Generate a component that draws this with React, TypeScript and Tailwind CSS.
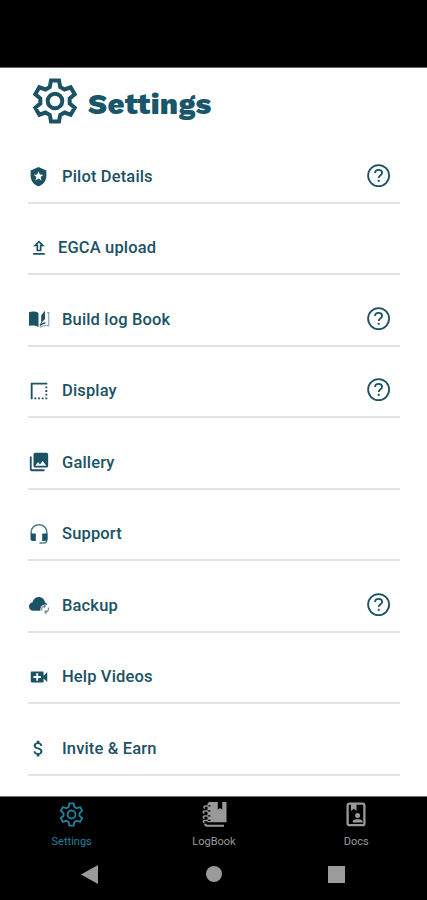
import type { ReactNode } from 'react';
import {
  MdAttachMoney,
  MdBorderStyle,
  MdCollections,
  MdLocalPolice,
  MdOutlineUpload,
  MdVideoCall,
} from 'react-icons/md';

const GEAR =
  'M-4 -20.5H4L5.2 -14L9.5 -11.5L15.7 -13.7L19.7 -6.8L14.7 -2.5V2.5L19.7 6.8L15.7 13.7L9.5 11.5L5.2 14L4 20.5H-4L-5.2 14L-9.5 11.5L-15.7 13.7L-19.7 6.8L-14.7 2.5V-2.5L-19.7 -6.8L-15.7 -13.7L-9.5 -11.5L-5.2 -14Z';

function Gear({ size, stroke }: { size: number; stroke: number }) {
  return (
    <svg width={size} height={size} viewBox="-23 -23 46 46" fill="none" stroke="currentColor" strokeWidth={stroke}>
      <path d={GEAR} />
      <circle r="7.3" />
    </svg>
  );
}

function BookPen() {
  return (
    <svg width="22" height="18" viewBox="0 0 22 18" fill="currentColor">
      <path d="M1 2.2C4 1.2 7.5 1.2 10.5 3V17C7.5 15.6 4 15.2 1 16Z" />
      <path d="M13.2 5.5L17 .8V9L13.2 13.2Z" />
      <path d="M11.8 13.8L17.5 12V13.4C15 13.8 13.2 15 11.8 16.6Z" />
      <path d="M19.2 2.6H20.8V15.6C17 15.2 14.5 15.6 12 17.3" fill="none" stroke="currentColor" strokeWidth="1.1" opacity=".55" />
    </svg>
  );
}

function Headset() {
  return (
    <svg width="20" height="22" viewBox="0 0 20 22" fill="none" stroke="currentColor">
      <path d="M2.2 11V9.3C2.2 4.8 5.5 1.8 10 1.8S17.8 4.8 17.8 9.3V17C17.8 19 16.5 20 14.8 20H10.5" strokeWidth="1.5" opacity=".75" />
      <path d="M1.5 10.5H6.8V18H4C2.3 18 1.5 16.9 1.5 15.5ZM13.2 10.5H18.5V15.5C18.5 16.9 17.7 18 16 18H13.2Z" fill="currentColor" stroke="none" />
    </svg>
  );
}

function CloudSync() {
  return (
    <svg width="22" height="18" viewBox="0 0 22 18">
      <path
        d="M5.3 14.8C2.7 14.8 1 13 1 10.5C1 8.2 2.5 6.5 4.6 6.2C5.4 3 7.6 1 10.8 1C14.1 1 16.5 3.2 17 6.4C18.4 6.8 19.2 7.6 19.4 8.8L16.4 8.4C13.4 8.8 12 11.2 12.4 14.8Z"
        fill="currentColor"
      />
      <path
        d="M14 14.4C13 12 14.4 9.8 17 10M15.6 8.5L17.3 10L15.8 11.8M20.2 11.4C21.2 13.8 19.6 16.2 17.2 16M18.6 17.6L16.8 16L18.4 14.3"
        fill="none"
        stroke="currentColor"
        strokeWidth="1.2"
        opacity=".65"
      />
    </svg>
  );
}

function HelpIcon() {
  return (
    <svg width="24" height="24" viewBox="0 0 24 24" fill="none" stroke="currentColor" strokeWidth="1.8">
      <circle cx="11.6" cy="11.6" r="10.5" />
      <path d="M8.1 9C8.1 7 9.6 5.8 11.6 5.8S15.1 7 15.1 8.9C15.1 11.2 11.7 11.4 11.7 14.1" />
      <path d="M11.7 15.8V17.8" strokeWidth="2" />
    </svg>
  );
}

function LogBookIcon() {
  return (
    <svg width="28" height="27" viewBox="0 0 28 27" fill="currentColor">
      <path d="M9 1H17.8V8.8L20 7L22.2 8.8V1H26.5V21.3H7.5V2.5Z" />
      <path d="M7 4.9H10.5M7 9.9H10.5M7 14.9H10.5M7 19.4H10.5" stroke="#000" strokeWidth="1.4" />
      <path
        d="M8.5 4.9H5.2C3.6 4.9 3.6 7.2 5.2 7.2M8 9.9H4.5C2.8 9.9 2.8 12.2 4.5 12.2M8 14.9H4.5C2.8 14.9 2.8 17.2 4.5 17.2M8 19.4H4.5C2.8 19.4 2.8 21.5 4.5 21.5"
        fill="none"
        stroke="currentColor"
        strokeWidth="1.5"
      />
      <path d="M5 22.7C5.2 24.2 5.8 24.7 7 24.7H24" fill="none" stroke="currentColor" strokeWidth="2" />
    </svg>
  );
}

function DocsIcon() {
  return (
    <svg width="20" height="25" viewBox="0 0 20 25" fill="currentColor">
      <rect x="1.6" y="1.6" width="16.8" height="21.6" rx="1.8" fill="none" stroke="currentColor" strokeWidth="2.3" />
      <path d="M5 2H10.5V9L7.8 6.8L5 9Z" />
      <circle cx="11.6" cy="13.4" r="2.5" />
      <path d="M6.8 20.6V19.2C6.8 17.7 9 17.2 11.6 17.2S16.4 17.7 16.4 19.2V20.6Z" />
    </svg>
  );
}

type Item = { label: string; icon: ReactNode; help?: boolean; tight?: boolean };

const items: Item[] = [
  { label: 'Pilot Details', icon: <MdLocalPolice size={21} />, help: true },
  { label: 'EGCA upload', icon: <MdOutlineUpload size={20} />, tight: true },
  { label: 'Build log Book', icon: <BookPen />, help: true },
  { label: 'Display', icon: <MdBorderStyle size={22} />, help: true },
  { label: 'Gallery', icon: <MdCollections size={22} /> },
  { label: 'Support', icon: <Headset /> },
  { label: 'Backup', icon: <CloudSync />, help: true },
  { label: 'Help Videos', icon: <MdVideoCall size={22} /> },
  { label: 'Invite & Earn', icon: <MdAttachMoney size={21} /> },
];

const tabs = [
  { label: 'Settings', icon: <Gear size={25} stroke={3.4} />, active: true },
  { label: 'LogBook', icon: <LogBookIcon />, active: false },
  { label: 'Docs', icon: <DocsIcon />, active: false },
];

export default function App() {
  return (
    <div className="flex h-[900px] w-full flex-col overflow-hidden bg-white font-['Roboto',sans-serif] text-[#1b5264]">
      <div className="box-content h-[67px] shrink-0 border-b border-[#666] bg-black" />

      <header className="flex h-[64px] shrink-0 items-start pl-8 pt-[10px]">
        <Gear size={46} stroke={4} />
        <h1 className="ml-[10px] mt-[8px] font-['Work_Sans','Inter',sans-serif] text-[29.5px] font-extrabold leading-[36px] tracking-[0.3px] text-[#19566a]">
          Settings
        </h1>
      </header>

      <main className="flex h-[664px] shrink-0 flex-col pl-[28px] pr-[27px]">
        {items.map((item) => (
          <div key={item.label} className="flex h-[71.5px] shrink-0 items-center border-b-2 border-[#e2e2e2] pt-[18px]">
            <span className="-ml-[0.5px] mr-[0.5px] flex w-[22px] justify-center pt-px">{item.icon}</span>
            <span
              className={`pt-[2px] text-[16.5px] font-medium leading-5 tracking-[0.15px] ${item.tight ? 'ml-[8px]' : 'ml-[12px]'}`}
            >
              {item.label}
            </span>
            {item.help && (
              <button className="ml-auto mr-[9px]">
                <HelpIcon />
              </button>
            )}
          </div>
        ))}
      </main>

      <footer className="flex-1 border-t border-[#777] bg-black">
        <nav className="grid h-[54px] grid-cols-3">
          {tabs.map((tab) => (
            <div
              key={tab.label}
              className={`flex flex-col items-center pl-px pt-[3px] text-[11px] ${tab.active ? 'text-[#247f9b]' : 'text-[#999]'}`}
            >
              <span className="flex h-[28px] items-center">{tab.icon}</span>
              <span className="mt-[7px] leading-[14px]">{tab.label}</span>
            </div>
          ))}
        </nav>
        <div className="flex h-[46px] items-center justify-between pl-[81px] pr-[82px] text-[#9b9b9b]">
          <svg width="17" height="19" viewBox="0 0 17 19" fill="currentColor">
            <path d="M0 9.5L17 0V19Z" />
          </svg>
          <span className="ml-px size-4 rounded-full bg-current" />
          <span className="size-[17px] bg-current" />
        </div>
      </footer>
    </div>
  );
}
